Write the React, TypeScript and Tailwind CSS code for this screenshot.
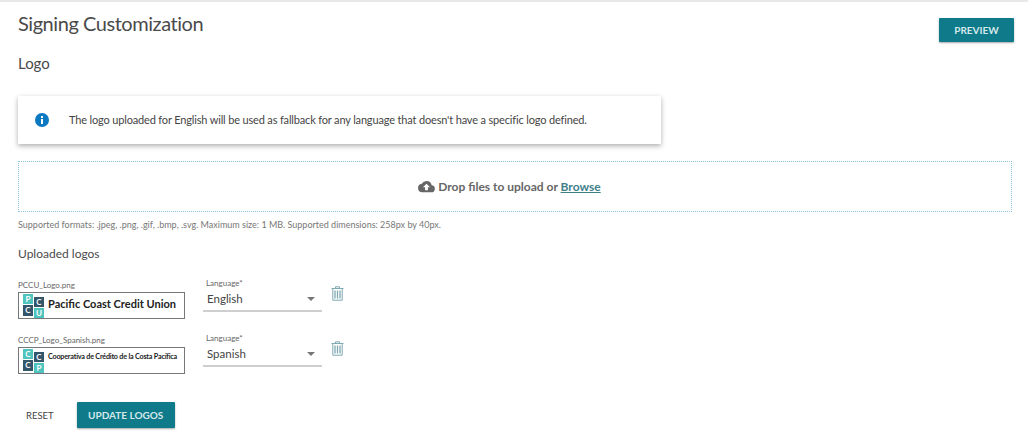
import React from "react";

const Tile = ({ c, bg, cls }: { c: string; bg: string; cls: string }) => (
  <div className={`flex items-center justify-center text-[8px] font-bold leading-none text-white ${cls}`} style={{ backgroundColor: bg }}>
    {c}
  </div>
);

const Mark = ({ a, b, c, d }: { a: string; b: string; c: string; d: string }) => (
  <div className="flex h-[24px] w-[21px] shrink-0 gap-[1px]">
    <div className="flex flex-col gap-[1px]">
      <Tile c={a} bg="#4fc3bd" cls="h-[10px] w-[10px]" />
      <Tile c={c} bg="#34566a" cls="h-[11px] w-[10px]" />
    </div>
    <div className="mt-[3px] flex flex-col gap-[1px]">
      <Tile c={b} bg="#34566a" cls="h-[10px] w-[10px]" />
      <Tile c={d} bg="#4fc3bd" cls="h-[10px] w-[10px]" />
    </div>
  </div>
);

const Trash = () => (
  <svg width="13" height="15" viewBox="0 0 13 15" fill="none" stroke="#7fa9b3" strokeWidth="1">
    <path d="M0.5 2.5H12.5M4.5 2.5V0.8H8.5V2.5M1.8 2.5V14.2H11.2V2.5" />
    <path d="M4 4.5V12.5M6.5 4.5V12.5M9 4.5V12.5" strokeWidth="1.3" />
  </svg>
);

const Row = ({
  file,
  lang,
  children,
  mt,
}: {
  file: string;
  lang: string;
  children: React.ReactNode;
  mt: string;
}) => (
  <div className={`flex items-start ${mt}`}>
    <div className="w-[167px]">
      <div className="text-[8px] leading-[12px] text-[#666]">{file}</div>
      <div className="mt-[1px] flex h-[27px] items-center gap-[4px] border border-[#777] pl-[4px]">{children}</div>
    </div>
    <div className="ml-[18px] mt-[-1px] w-[119px]">
      <div className="pl-[3px] text-[8px] leading-[11px] text-[#666]">Language*</div>
      <div className="flex h-[23px] items-center justify-between border-b-2 border-[#cfcfcf] pb-[1px] pl-[4px] pr-[7px] text-[11.5px] text-[#444]">
        <span>{lang}</span>
        <span className="h-0 w-0 border-x-[4px] border-t-[4px] border-x-transparent border-t-[#777]" />
      </div>
    </div>
    <div className="ml-[9px] mt-[7px]">
      <Trash />
    </div>
  </div>
);

export default function App() {
  return (
    <div className="h-[440px] w-[1028px] overflow-hidden border-t-2 border-[#e8e8e8] bg-white font-['Lato',sans-serif] text-[#444]">
      <div className="px-[18px]">
        <div className="flex items-start justify-between">
          <h1 className="mt-[8px] text-[20px] leading-[26px] tracking-[-0.45px] text-[#4a4a4a]">Signing Customization</h1>
          <button className="mr-[-4px] mt-[16px] h-[24px] w-[75px] rounded-[1px] bg-[#0e7a8a] text-[10px] font-bold text-[#d5e8ea] shadow-[0_1px_2px_rgba(0,0,0,0.35)]">
            PREVIEW
          </button>
        </div>
        <h2 className="mt-[11px] text-[15px] leading-[20px] text-[#4a4a4a]">Logo</h2>
        <div className="mt-[23px] flex h-[48px] w-[643px] items-center bg-white pl-[17px] text-[11px] tracking-[-0.16px] text-[#444] shadow-[0_2px_5px_rgba(0,0,0,0.32)]">
          <svg width="14" height="14" viewBox="0 0 14 14" className="shrink-0">
            <circle cx="7" cy="7" r="7" fill="#0b78c2" />
            <rect x="6" y="6" width="2" height="5" fill="#fff" />
            <rect x="6" y="3" width="2" height="2" fill="#fff" />
          </svg>
          <span className="ml-[20px]">The logo uploaded for English will be used as fallback for any language that doesn't have a specific logo defined.</span>
        </div>
        <div className="mt-[17px] flex h-[51px] w-[994px] items-center justify-center border border-dotted border-[#8cc4e0] pr-[11px] text-[12px] font-bold text-[#666]">
          <svg width="17" height="12" viewBox="0 0 24 17" fill="#666" className="mr-[3px]">
            <path d="M19.35 6.04A7.49 7.49 0 0 0 12 0a7.5 7.5 0 0 0-6.65 4.04A6 6 0 0 0 6 16h13a5 5 0 0 0 .35-9.96zM14 9v4h-4V9H7l5-5 5 5h-3z" />
          </svg>
          <span>Drop files to upload or&nbsp;</span>
          <span className="text-[#3f7f8c] underline">Browse</span>
        </div>
        <p className="mt-[7px] text-[9px] leading-[12px] text-[#777]">
          Supported formats: .jpeg, .png, .gif, .bmp, .svg. Maximum size: 1 MB. Supported dimensions: 258px by 40px.
        </p>
        <h3 className="mt-[15px] text-[12px] leading-[16px] text-[#4a4a4a]">Uploaded logos</h3>
        <Row mt="mt-[17px]" file="PCCU_Logo.png" lang="English">
          <Mark a="P" b="C" c="C" d="U" />
          <span className="mb-[4px] text-[11px] font-bold leading-none text-[#222]">Pacific Coast Credit Union</span>
        </Row>
        <Row mt="mt-[15px]" file="CCCP_Logo_Spanish.png" lang="Spanish">
          <Mark a="C" b="C" c="C" d="P" />
          <span className="mb-[8px] whitespace-nowrap text-[7.2px] font-bold leading-none tracking-[-0.2px] text-[#222]">Cooperativa de Crédito de la Costa Pacífica</span>
        </Row>
        <div className="mt-[28px] flex items-center">
          <span className="ml-[8px] mt-[2px] text-[9.5px] text-[#444]">RESET</span>
          <button className="ml-[23px] h-[26px] w-[98px] rounded-[1px] bg-[#0e7a8a] text-[10px] font-bold text-[#d5e8ea] shadow-[0_1px_2px_rgba(0,0,0,0.35)]">
            UPDATE LOGOS
          </button>
        </div>
      </div>
    </div>
  );
}
